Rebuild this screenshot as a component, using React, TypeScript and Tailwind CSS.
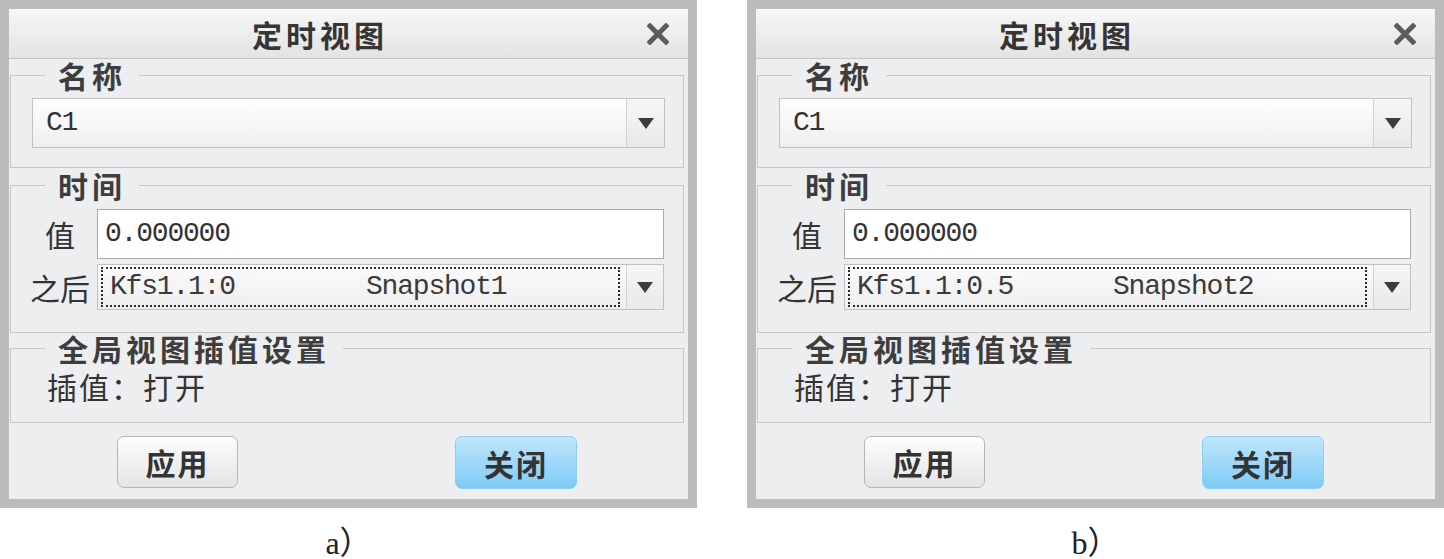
import React from 'react';

interface DialogProps {
  after: string;
  snapshot: string;
  caption: string;
}

const Arrow = () => (
  <svg width="16" height="11" viewBox="0 0 16 11">
    <polygon points="0,0 16,0 8,11" fill="#3c3c3c" />
  </svg>
);

const CloseIcon = () => (
  <svg width="22" height="22" viewBox="0 0 22 22">
    <path d="M3 3 L19 19 M19 3 L3 19" stroke="#5c5c5c" strokeWidth="5" strokeLinecap="square" />
  </svg>
);

const Legend = ({ text }: { text: string }) => (
  <legend className="ml-[34px] px-[13px] text-[30px] leading-[30px] font-bold tracking-[4px] text-[#3d3d3d] font-['Noto_Sans_CJK_SC',sans-serif]">
    {text}
  </legend>
);

const Dialog = ({ after, snapshot, caption }: DialogProps) => {
  return (
    <div className="flex flex-col w-[697px]">
      <div className="flex flex-col h-[508px] border-[9px] border-[#bcbcbc] bg-[#edeef0]">
        {/* title bar */}
        <div className="flex items-center h-[50px] border-b border-[#c4c4c4] bg-gradient-to-b from-[#f7f7f7] to-[#e3e3e3]">
          <div className="flex-1 text-center text-[30px] leading-[30px] font-bold tracking-[4px] text-[#353535] font-['Noto_Sans_CJK_SC',sans-serif]">
            定时视图
          </div>
          <div className="flex w-[57px] justify-center pr-[4px]">
            <CloseIcon />
          </div>
        </div>

        {/* 名称 */}
        <fieldset className="mt-[1px] ml-[1px] mr-[4px] border border-[#c6c6c6]">
          <Legend text="名称" />
          <div className="pt-[8px] pb-[19px] pl-[21px] pr-[18px]">
            <div className="flex h-[50px] border border-[#c2c2c2] bg-gradient-to-b from-[#fdfdfd] to-[#efefef]">
              <div className="flex-1 flex items-center pl-[13px] text-[28px] tracking-[-1.2px] text-[#333] font-['Liberation_Mono',monospace]">
                C1
              </div>
              <div className="flex w-[38px] items-center justify-center border-l border-[#d2d2d2] bg-gradient-to-b from-[#f6f6f6] to-[#e9e9e9]">
                <Arrow />
              </div>
            </div>
          </div>
        </fieldset>

        {/* 时间 */}
        <fieldset className="mt-[2px] ml-[1px] mr-[4px] border border-[#c6c6c6]">
          <Legend text="时间" />
          <div className="flex flex-col gap-[5px] pt-[9px] pb-[22px] pl-[17px] pr-[19px]">
            <div className="flex h-[50px] items-center">
              <div className="w-[64px] text-center text-[30px] leading-[30px] text-[#333] font-['Noto_Sans_CJK_SC',sans-serif]">
                值
              </div>
              <div className="ml-[5px] flex flex-1 h-full items-center border border-[#a9a9a9] bg-white pl-[7px] text-[28px] tracking-[-1.2px] text-[#333] font-['Liberation_Mono',monospace]">
                0.000000
              </div>
            </div>
            <div className="flex h-[46px] items-center">
              <div className="w-[64px] text-center text-[30px] leading-[30px] text-[#333] font-['Noto_Sans_CJK_SC',sans-serif]">
                之后
              </div>
              <div className="ml-[5px] flex flex-1 h-full border border-[#c2c2c2] bg-gradient-to-b from-[#fbfbfb] to-[#eeeeee]">
                <div className="flex flex-1 py-[2px] pl-[3px] pr-[6px]">
                  <div className="flex flex-1 items-center border-2 border-dotted border-[#2a2a2a] pl-[7px] text-[28px] tracking-[-1.2px] text-[#3a3a3a] font-['Liberation_Mono',monospace] whitespace-pre">
                    <span className="w-[256px]">{after}</span>
                    <span>{snapshot}</span>
                  </div>
                </div>
                <div className="flex w-[37px] items-center justify-center border-l border-[#d2d2d2] bg-gradient-to-b from-[#f6f6f6] to-[#e9e9e9]">
                  <Arrow />
                </div>
              </div>
            </div>
          </div>
        </fieldset>

        {/* 全局视图插值设置 */}
        <fieldset className="ml-[1px] mr-[4px] border border-[#c6c6c6]">
          <Legend text="全局视图插值设置" />
          <div className="pt-[8px] pb-[21px] pl-[36px]">
            <div className="text-[30px] leading-[30px] tracking-[2px] text-[#333] font-['Noto_Sans_CJK_SC',sans-serif]">
              插值：打开
            </div>
          </div>
        </fieldset>

        {/* buttons */}
        <div className="flex flex-1 items-start pt-[13px] pl-[108px]">
          <button className="flex h-[52px] w-[121px] items-center justify-center rounded-[7px] border border-[#b5b5b5] bg-gradient-to-b from-[#fdfdfd] to-[#e4e4e4] text-[30px] leading-[30px] font-bold tracking-[2px] text-[#333] font-['Noto_Sans_CJK_SC',sans-serif]">
            应用
          </button>
          <button className="ml-[217px] flex h-[53px] w-[122px] items-center justify-center rounded-[7px] border border-[#93cdee] bg-gradient-to-b from-[#bfe6fc] to-[#7ecbf6] text-[30px] leading-[30px] font-bold tracking-[2px] text-[#333] font-['Noto_Sans_CJK_SC',sans-serif]">
            关闭
          </button>
        </div>
      </div>
      <div className="mt-[23px] text-center text-[32px] leading-[24px] text-[#222] font-['Liberation_Serif','Noto_Sans_CJK_SC',serif]">
        {caption}
      </div>
    </div>
  );
};

const App = () => {
  return (
    <div className="flex w-[1444px] h-[559px] gap-[50px] overflow-hidden bg-white">
      <Dialog after="Kfs1.1:0" snapshot="Snapshot1" caption="a）" />
      <Dialog after="Kfs1.1:0.5" snapshot="Snapshot2" caption="b）" />
    </div>
  );
};

export default App;
